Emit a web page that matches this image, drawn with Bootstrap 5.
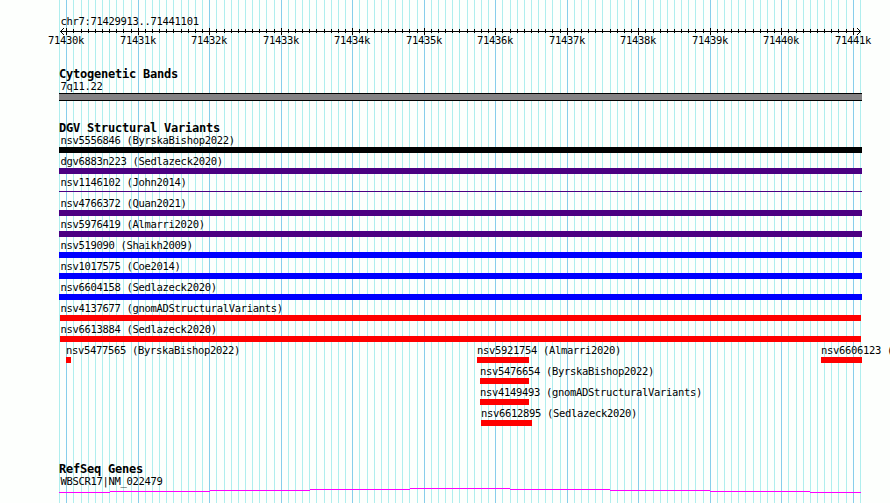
<!DOCTYPE html>
<html lang="en">
<head>
    <meta charset="UTF-8">
    <meta name="viewport" content="width=device-width, initial-scale=1.0">
    <title>chr7:71429913..71441101</title>
    <link href="https://cdn.jsdelivr.net/npm/bootstrap@5.3.2/dist/css/bootstrap.min.css" rel="stylesheet">
    <style>
        body {
            background-color: #fdfffd;
            color: #000;
            font-family: 'DejaVu Sans Mono', 'Liberation Mono', monospace;
            font-size: 10.5px;
            letter-spacing: -0.32px;
            line-height: 12px;
        }
        .browser {
            width: 890px;
            height: 503px;
            padding-top: 15px;
        }
        .grid-lines {
            z-index: 0;
        }
        .tracks {
            z-index: 1;
        }
        .region, .feature-name {
            height: 12px;
            padding-left: 1.6px;
            white-space: pre;
        }
        .region {
            margin-left: 59px;
        }
        .feature-name {
            line-height: 10px;
        }
        .axis {
            height: 42px;
        }
        .axis text {
            text-anchor: middle;
        }
        .track-title {
            font-size: 12px;
            font-weight: 700;
            letter-spacing: -0.22px;
            height: 12px;
            margin: 0 0 0 59px;
            line-height: 10px;
        }
        .feature-row {
            height: 21px;
        }
        .bar {
            height: 6px;
        }
        .bar-thin {
            height: 1px;
            margin-top: 2px;
        }
        .band {
            height: 8px;
            background-color: #848284;
            border: solid #000;
            border-width: 1px 0;
        }
        .band-track {
            height: 42px;
        }
        .dgv-track {
            height: 329px;
        }
        .gene-track {
            margin-left: 59px;
        }
    </style>
</head>
<body>
<div class="browser position-relative overflow-hidden">
    <svg class="grid-lines position-absolute top-0 start-0" id="gridLines" width="890" height="503" shape-rendering="crispEdges"></svg>
    <div class="tracks position-relative">
        <div class="region">chr7:71429913..71441101</div>
        <svg class="axis d-block" id="axis" width="890" height="42"></svg>

        <h2 class="track-title">Cytogenetic Bands</h2>
        <div class="band-track" id="bandTrack"></div>

        <h2 class="track-title">DGV Structural Variants</h2>
        <div class="dgv-track" id="dgvTrack"></div>

        <h2 class="track-title">RefSeq Genes</h2>
        <div class="gene-track">
            <div class="feature-name">WBSCR17|NM_022479</div>
        </div>
        <svg class="d-block" width="890" height="12" shape-rendering="crispEdges">
            <path d="M59 4.5H110M110 3.5H210M210 2.5H310M310 1.5H410M410 .5H510M510 1.5H610M610 2.5H710M710 3.5H810M810 4.5H861" stroke="#f0f" fill="none"/>
        </svg>
    </div>
</div>

<script src="https://cdn.jsdelivr.net/npm/bootstrap@5.3.2/dist/js/bootstrap.bundle.min.js"></script>
<script>
    const BLACK = '#000', INDIGO = '#4b0082', BLUE = '#0000ff', RED = '#ff0000';

    // each row: [name, start px, end px, colour, thin]
    const variants = [
        [['nsv5556846 (ByrskaBishop2022)', 59, 862, BLACK]],
        [['dgv6883n223 (Sedlazeck2020)', 59, 862, INDIGO]],
        [['nsv1146102 (John2014)', 59, 862, INDIGO, true]],
        [['nsv4766372 (Quan2021)', 59, 862, INDIGO]],
        [['nsv5976419 (Almarri2020)', 59, 862, INDIGO]],
        [['nsv519090 (Shaikh2009)', 59, 862, BLUE]],
        [['nsv1017575 (Coe2014)', 59, 862, BLUE]],
        [['nsv6604158 (Sedlazeck2020)', 59, 862, BLUE]],
        [['nsv4137677 (gnomADStructuralVariants)', 60, 861, RED]],
        [['nsv6613884 (Sedlazeck2020)', 60, 861, RED]],
        [
            ['nsv5477565 (ByrskaBishop2022)', 66, 71, RED],
            ['nsv5921754 (Almarri2020)', 477, 529, RED],
            ['nsv6606123 (Sedlazeck2020)', 821, 862, RED]
        ],
        [['nsv5476654 (ByrskaBishop2022)', 480, 529, RED]],
        [['nsv4149493 (gnomADStructuralVariants)', 480, 529, RED]],
        [['nsv6612895 (Sedlazeck2020)', 481, 532, RED]]
    ];

    function feature(f, from) {
        const [name, start, end, color, thin] = f;
        // names line up just inside the panel edge, or just before a feature inside it
        const shift = start === 59 ? 0 : start === 60 ? -1 : -1.6;
        return `<div class="flex-shrink-0" style="width: ${end - start}px; margin-left: ${start - from}px">
            <div class="feature-name" style="margin-left: ${shift}px">${name}</div>
            <div class="bar ${thin ? 'bar-thin' : ''}" style="background-color: ${color}"></div>
        </div>`;
    }

    document.getElementById('dgvTrack').innerHTML = variants.map(row => {
        let from = 0;
        return '<div class="feature-row d-flex">' + row.map(f => {
            const html = feature(f, from);
            from = f[2];
            return html;
        }).join('') + '</div>';
    }).join('');

    document.getElementById('bandTrack').innerHTML =
        `<div style="width: 803px; margin-left: 59px">
            <div class="feature-name">7q11.22</div>
            <div class="band"></div>
        </div>`;

    // one line per 100 bases, a darker one per 1000
    let lines = '', ticks = '', labels = '';
    for (let k = -1; k <= 111; k++) {
        const x = Math.floor(66.7 + 7.15 * k);
        const major = k % 10 === 0;
        lines += `<rect x="${x}" y="0" width="1" height="503" fill="${major ? '#87ceeb' : '#afeeee'}"/>`;
        if (k >= 0 && k < 111) {
            ticks += major
                ? `<rect x="${x}" y="1" width="1" height="7"/>`
                : `<rect x="${x}" y="2" width="1" height="4"/>`;
        }
        if (major) {
            labels += `<text x="${x}" y="17">${71430 + k / 10}k</text>`;
        }
    }
    document.getElementById('gridLines').innerHTML = lines;
    document.getElementById('axis').innerHTML =
        `<g shape-rendering="crispEdges"><rect x="60" y="4" width="801" height="1"/>${ticks}</g>
        <path d="M64 1L60.5 4.5L64 8M857 1L860.5 4.5L857 8" fill="none" stroke="#000"/>${labels}`;
</script>
</body>
</html>
